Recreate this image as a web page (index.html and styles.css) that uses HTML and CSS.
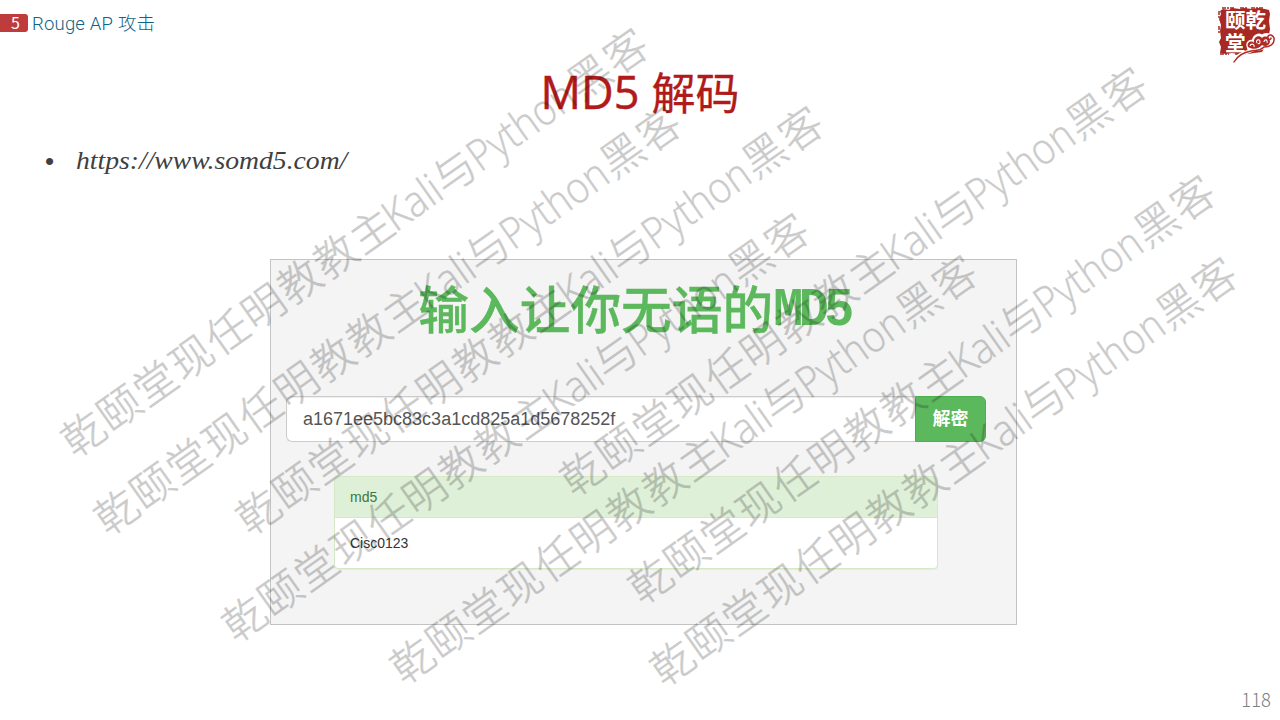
FILE: index.html
```html
<!DOCTYPE html>
<html lang="zh-CN">
<head>
<meta charset="utf-8">
<title>MD5 解码</title>
<link rel="stylesheet" href="styles.css">
</head>
<body>
<main class="slide">
  <header class="topbar">
    <span class="chapter-number">5</span>
    <span class="chapter-name">Rouge AP <span class="chapter-cn">攻击</span></span>
    <svg class="logo" width="60" height="60" viewBox="0 0 60 60" aria-hidden="true">
      <path class="seal" d="M3 7 L6 5 L12 6 L15 4 L23 5 L27 4 L35 5 L41 4 L48 5 L52 6 L53 10 L52 17 L53 25 L52 31 L54 36 L49 42 L45 48 L37 49 L31 50 L27 49 L21 50 L15 49 L9 50 L3 49 L4 43 L2 38 L4 34 L3 27 L4 21 L2 15 L4 10Z"/>
      <path class="seal-edge" d="M5 4H18M23 4H31M34 4H46M2 7V15M2 22V29M3 50H12M18 50H29"/>
      <text class="seal-text" x="8" y="24">颐</text>
      <text class="seal-text" x="28.5" y="24">乾</text>
      <text class="seal-text" x="8" y="46.5">堂</text>
      <path class="cloud-back" d="M31 43C29 38 34 36 36 38C36 32 42 29 45 32C48 29 55 30 57 35C59 40 54 44 50 42C46 46 40 45 37 46C31 49 22 50 17 57C20 51 27 48 32 47Z"/>
      <path class="cloud-fill" d="M31 43C29 38 35 36 37 39C36 33 42 30 45 34C48 31 53 33 53 38C52 42 48 43 45 41C42 45 36 46 31 43Z"/>
      <path class="cloud-inner" d="M33 42C34 39 38 40 37 43M40 39C38 36 43 34 43 38C43 40 41 40 41 39M47 38C47 35 51 35 50 39"/>
      <path class="cloud-tail" d="M17 58C21 51 28 48 34 47C41 46 43 47 47 43C53 43 58 40 57 34C55 29 50 31 51 34C51 36 54 36 54 34"/>
    </svg>
  </header>
  <h1 class="title"><span class="title-latin">MD5</span><span class="title-cn">解码</span></h1>
  <ul class="links"><li class="link-item"><span class="bullet">•</span><span class="url">https://www.somd5.com/</span></li></ul>
  <section class="panel">
    <h2 class="panel-title"><span class="panel-title-cn">输入让你无语的</span><span class="panel-title-latin">MD5</span></h2>
    <div class="search">
      <div class="hash-field">a1671ee5bc83c3a1cd825a1d5678252f</div>
      <button class="decrypt" type="button">解密</button>
    </div>
    <div class="result">
      <div class="result-head">md5</div>
      <div class="result-body">Cisc0123</div>
    </div>
  </section>
  <footer class="page-number">118</footer>
  <svg class="watermarks" width="1280" height="720" viewBox="0 0 1280 720">
    <g transform="translate(83 433.5) rotate(-35.2)"><text x="-21" y="16" textLength="395">乾颐堂现任明教教主</text><text class="wl" x="371" y="16" textLength="62" lengthAdjust="spacingAndGlyphs">Kali</text><text x="433" y="16">与</text><text class="wl" x="475" y="16" textLength="121" lengthAdjust="spacingAndGlyphs">Python</text><text x="598" y="16" textLength="87">黑客</text></g>
    <g transform="translate(116 511.5) rotate(-35.2)"><text x="-21" y="16" textLength="395">乾颐堂现任明教教主</text><text class="wl" x="371" y="16" textLength="62" lengthAdjust="spacingAndGlyphs">Kali</text><text x="433" y="16">与</text><text class="wl" x="475" y="16" textLength="121" lengthAdjust="spacingAndGlyphs">Python</text><text x="598" y="16" textLength="87">黑客</text></g>
    <g transform="translate(258 511.5) rotate(-35.2)"><text x="-21" y="16" textLength="395">乾颐堂现任明教教主</text><text class="wl" x="371" y="16" textLength="62" lengthAdjust="spacingAndGlyphs">Kali</text><text x="433" y="16">与</text><text class="wl" x="475" y="16" textLength="121" lengthAdjust="spacingAndGlyphs">Python</text><text x="598" y="16" textLength="87">黑客</text></g>
    <g transform="translate(244 618.5) rotate(-35.2)"><text x="-21" y="16" textLength="395">乾颐堂现任明教教主</text><text class="wl" x="371" y="16" textLength="62" lengthAdjust="spacingAndGlyphs">Kali</text><text x="433" y="16">与</text><text class="wl" x="475" y="16" textLength="121" lengthAdjust="spacingAndGlyphs">Python</text><text x="598" y="16" textLength="87">黑客</text></g>
    <g transform="translate(582 472.5) rotate(-35.2)"><text x="-21" y="16" textLength="395">乾颐堂现任明教教主</text><text class="wl" x="371" y="16" textLength="62" lengthAdjust="spacingAndGlyphs">Kali</text><text x="433" y="16">与</text><text class="wl" x="475" y="16" textLength="121" lengthAdjust="spacingAndGlyphs">Python</text><text x="598" y="16" textLength="87">黑客</text></g>
    <g transform="translate(412 660.5) rotate(-35.2)"><text x="-21" y="16" textLength="395">乾颐堂现任明教教主</text><text class="wl" x="371" y="16" textLength="62" lengthAdjust="spacingAndGlyphs">Kali</text><text x="433" y="16">与</text><text class="wl" x="475" y="16" textLength="121" lengthAdjust="spacingAndGlyphs">Python</text><text x="598" y="16" textLength="87">黑客</text></g>
    <g transform="translate(650 580.5) rotate(-35.2)"><text x="-21" y="16" textLength="395">乾颐堂现任明教教主</text><text class="wl" x="371" y="16" textLength="62" lengthAdjust="spacingAndGlyphs">Kali</text><text x="433" y="16">与</text><text class="wl" x="475" y="16" textLength="121" lengthAdjust="spacingAndGlyphs">Python</text><text x="598" y="16" textLength="87">黑客</text></g>
    <g transform="translate(672 662.5) rotate(-35.2)"><text x="-21" y="16" textLength="395">乾颐堂现任明教教主</text><text class="wl" x="371" y="16" textLength="62" lengthAdjust="spacingAndGlyphs">Kali</text><text x="433" y="16">与</text><text class="wl" x="475" y="16" textLength="121" lengthAdjust="spacingAndGlyphs">Python</text><text x="598" y="16" textLength="87">黑客</text></g>
  </svg>
</main>
</body>
</html>
```
FILE: styles.css
```css
* { box-sizing: border-box; }
body { margin: 0; background: #fff; }
.slide {
  position: relative;
  width: 1280px;
  height: 720px;
  overflow: hidden;
  display: flex;
  flex-direction: column;
  background: #fff;
  font-family: "Open Sans", "Noto Sans CJK SC", sans-serif;
}
.topbar { display: flex; align-items: flex-start; height: 61px; padding: 4px 3px 0 0; flex: none; }
.chapter-number {
  width: 28px; height: 18px; margin-top: 10px; padding-left: 3px;
  border-radius: 0 3px 3px 0;
  background: #bf3c3c; color: #fff;
  font: 400 16px/17px "Noto Sans CJK SC", sans-serif; text-align: center;
}
.chapter-name {
  margin: 6px 0 0 4px;
  color: #0e6484;
  font-family: Roboto, "Noto Sans CJK SC", sans-serif;
  font-size: 18.5px; line-height: 24px; font-weight: 300; letter-spacing: 0.2px;
}
.chapter-cn { font-family: "Noto Sans CJK SC", sans-serif; }
.logo { margin-left: auto; flex: none; }
.seal { fill: #a82824; }
.seal-edge { fill: none; stroke: #a82824; stroke-width: 1.5; stroke-dasharray: 4 1 2 1; }
.seal-text { fill: #fff; font: 700 20.5px/20px "Noto Sans CJK SC", sans-serif; }
.cloud-back { fill: #fff; stroke: #fff; stroke-width: 2.5; }
.cloud-fill { fill: #b02a26; }
.cloud-inner { fill: none; stroke: #fff; stroke-width: 1.1; }
.cloud-tail { fill: none; stroke: #b02a26; stroke-width: 1.5; stroke-linecap: round; }
.title {
  display: flex; justify-content: center; gap: 12px;
  height: 67px; margin: 0; flex: none;
  color: #b11a1a; font-size: 44px; line-height: 61px; font-weight: 400;
}
.title-latin { font-size: 45px; -webkit-text-stroke: 0.5px #b11a1a; }
.title-cn { font-family: "Noto Sans CJK SC", sans-serif; -webkit-text-stroke: 0.3px #b11a1a; }
.links { list-style: none; margin: 0; padding: 15px 0 0 45px; height: 131px; flex: none; }
.link-item { display: flex; align-items: center; height: 36px; color: #404040; }
.bullet { width: 31px; font: 26px/34px "Liberation Sans", sans-serif; }
.url { font: italic 26px/36px "Liberation Serif", serif; transform: scaleX(1.063); transform-origin: left; }
.panel {
  width: 747px; height: 366px; margin-left: 270px; padding: 16px 30px 0 15px;
  border: 1px solid #c3c3c3; background: #f4f4f4;
  flex: none;
}
.panel-title {
  display: flex; justify-content: center; align-items: baseline;
  height: 120px; margin: 0; padding-right: 4px;
  color: #5cb85c; font-size: 51px; line-height: 62px; font-weight: 500;
}
.panel-title-cn { font-family: "Noto Sans CJK SC", sans-serif; font-size: 50.7px; -webkit-text-stroke: 0.4px #5cb85c; }
.panel-title-latin {
  font-family: "Liberation Mono", monospace; font-weight: 700; font-size: 50px; letter-spacing: -4.5px;
  transform: translateY(-5px) scaleY(1.08);
}
.search { display: flex; height: 46px; }
.hash-field {
  flex: 1; padding: 0 16px;
  border: 1px solid #ccc; border-right: 0; border-radius: 6px 0 0 6px;
  background: #fff; box-shadow: inset 0 1px 1px rgba(0,0,0,.075);
  color: #555; font: 18px/44px "Liberation Sans", sans-serif;
}
.decrypt {
  width: 71px; padding: 0 0 4px;
  border: 1px solid #4cae4c; border-radius: 0 6px 6px 0;
  background: #5cb85c; color: #fff;
  font: 700 18px/40px "Noto Sans CJK SC", sans-serif;
}
.result {
  width: 604px; height: 93px; margin: 34px 0 0 48px;
  border: 1px solid #d6e9c6; border-radius: 4px; background: #fff;
  box-shadow: 0 1px 1px rgba(0,0,0,.05);
  font: 14px/20px "Liberation Sans", sans-serif; color: #333;
}
.result-head {
  height: 41px; padding: 10px 15px;
  border-bottom: 1px solid #d6e9c6; border-radius: 3px 3px 0 0;
  background: #dff0d8; color: #3c763d;
}
.result-body { padding: 15px; }
.page-number {
  margin: auto 9px 9px auto;
  color: #808080; font: 300 18.5px/24px "Noto Sans CJK SC", sans-serif;
}
.watermarks { position: absolute; left: 0; top: 0; pointer-events: none; }
.watermarks text {
  font: 300 42.5px "Noto Sans CJK SC", sans-serif;
  fill: #111; stroke: #111; stroke-width: 0.5; opacity: .22;
}
.watermarks .wl { font: 300 43px "Open Sans", sans-serif; }
```
